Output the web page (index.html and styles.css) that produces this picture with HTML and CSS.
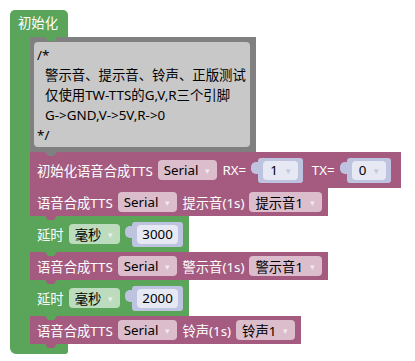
FILE: index.html
```html
<!DOCTYPE html>
<html lang="zh">
<head>
<meta charset="utf-8">
<link rel="stylesheet" href="styles.css">
</head>
<body>
<div class="ws">
  <div class="c-block">
    <div class="c-head">初始化</div>
    <div class="c-mid">
      <div class="c-arm"></div>
      <div class="stack">
        <div class="blk comment">
          <div class="comment-text">
            <div>/*</div>
            <div class="ind">警示音、提示音、铃声、正版测试</div>
            <div class="ind">仅使用TW-TTS的G,V,R三个引脚</div>
            <div class="ind">G-&gt;GND,V-&gt;5V,R-&gt;0</div>
            <div>*/</div>
          </div>
        </div>
        <div class="blk pink h36 init">
          <span>初始化语音合成TTS</span>
          <span class="dd dd-pink">Serial<i class="arr">▾</i></span>
          <span>RX=</span>
          <span class="val"><span class="vfield">1<i class="arr arr-l">▾</i></span></span>
          <span class="lbl-tx">TX=</span>
          <span class="val"><span class="vfield">0<i class="arr arr-l">▾</i></span></span>
        </div>
        <div class="blk pink h28">
          <span>语音合成TTS</span>
          <span class="dd dd-pink">Serial<i class="arr">▾</i></span>
          <span>提示音(1s)</span>
          <span class="dd dd-pink">提示音1<i class="arr">▾</i></span>
        </div>
        <div class="blk green h36">
          <span>延时</span>
          <span class="dd dd-green">毫秒<i class="arr">▾</i></span>
          <span class="val"><span class="vfield num">3000</span></span>
        </div>
        <div class="blk pink h28">
          <span>语音合成TTS</span>
          <span class="dd dd-pink">Serial<i class="arr">▾</i></span>
          <span>警示音(1s)</span>
          <span class="dd dd-pink">警示音1<i class="arr">▾</i></span>
        </div>
        <div class="blk green h36">
          <span>延时</span>
          <span class="dd dd-green">毫秒<i class="arr">▾</i></span>
          <span class="val"><span class="vfield num">2000</span></span>
        </div>
        <div class="blk pink h28">
          <span>语音合成TTS</span>
          <span class="dd dd-pink">Serial<i class="arr">▾</i></span>
          <span>铃声(1s)</span>
          <span class="dd dd-pink">铃声1<i class="arr">▾</i></span>
        </div>
      </div>
    </div>
    <div class="c-foot"></div>
  </div>
</div>
</body>
</html>
```
FILE: styles.css
```css
body {
  margin: 0;
  background: #ffffff;
  font-family: "Noto Sans", "Noto Sans CJK SC", sans-serif;
  font-size: 13.33px;
}
.ws {
  padding: 10px 0 0 10px;
}
.c-block {
  display: inline-flex;
  flex-direction: column;
  align-items: flex-start;
}
.c-head {
  position: relative;
  width: 58px;
  height: 27px;
  box-sizing: border-box;
  padding-left: 8px;
  line-height: 27px;
  background: #5ba55b;
  color: #fff;
  border-radius: 5px 5px 0 0;
}
.c-head::after,
.blk::after {
  content: "";
  position: absolute;
  bottom: -4px;
  width: 12px;
  height: 4px;
  background: inherit;
  clip-path: polygon(0 0, 100% 0, 75% 100%, 25% 100%);
  z-index: 2;
}
.c-head::after {
  left: 35px;
}
.blk::after {
  left: 15px;
}
.c-mid {
  display: flex;
}
.c-arm {
  width: 20px;
  background: #5ba55b;
}
.stack {
  display: flex;
  flex-direction: column;
  align-items: flex-start;
}
.c-foot {
  width: 58px;
  height: 10px;
  background: #5ba55b;
  border-radius: 0 0 3px 6px;
}
.blk {
  position: relative;
  display: flex;
  align-items: center;
  gap: 5px;
  box-sizing: border-box;
  padding: 0 6px 0 7px;
  color: #fff;
  white-space: nowrap;
}
.pink { background: #a55b80; }
.green { background: #5ba55b; }
.h36 { height: 36px; }
.h28 { height: 28px; }
.init { padding-right: 10px; }
.comment {
  display: block;
  width: 226px;
  padding: 5px 6px 5px 4px;
  background: #808080;
  color: #000;
}
.comment-text {
  background: #c8c8c8;
  border-radius: 4px;
  padding: 3px 3px 2px;
  line-height: 20px;
  font-size: 13.4px;
}
.ind {
  padding-left: 8px;
}
.dd {
  display: inline-flex;
  align-items: center;
  height: 20px;
  padding: 0 7px 0 6px;
  border-radius: 4px;
  color: #000;
  gap: 7px;
}
.dd-pink { background: #dbbdcc; }
.dd-green { background: #bddbbd; }
.arr {
  font-style: normal;
  font-size: 9px;
  color: #f4e8ee;
}
.dd-green .arr { color: #e6f3e6; }
.arr-l { color: #c4c7de; }
.val {
  position: relative;
  display: inline-flex;
  align-items: center;
  height: 25px;
  margin-left: 7px;
  padding: 0 5px;
  background: #bec3e0;
  border-radius: 3px;
}
.val::before {
  content: "";
  position: absolute;
  left: -7px;
  top: 4px;
  width: 8px;
  height: 12px;
  background: #bec3e0;
  border-radius: 5px 0 0 5px;
}
.vfield {
  display: inline-flex;
  align-items: center;
  gap: 8px;
  height: 19px;
  padding: 0 7px;
  background: #e6e8f3;
  border-radius: 4px;
  color: #000;
}
.vfield.num {
  padding: 0 5px;
}
.lbl-tx {
  margin-left: 4px;
}
```
